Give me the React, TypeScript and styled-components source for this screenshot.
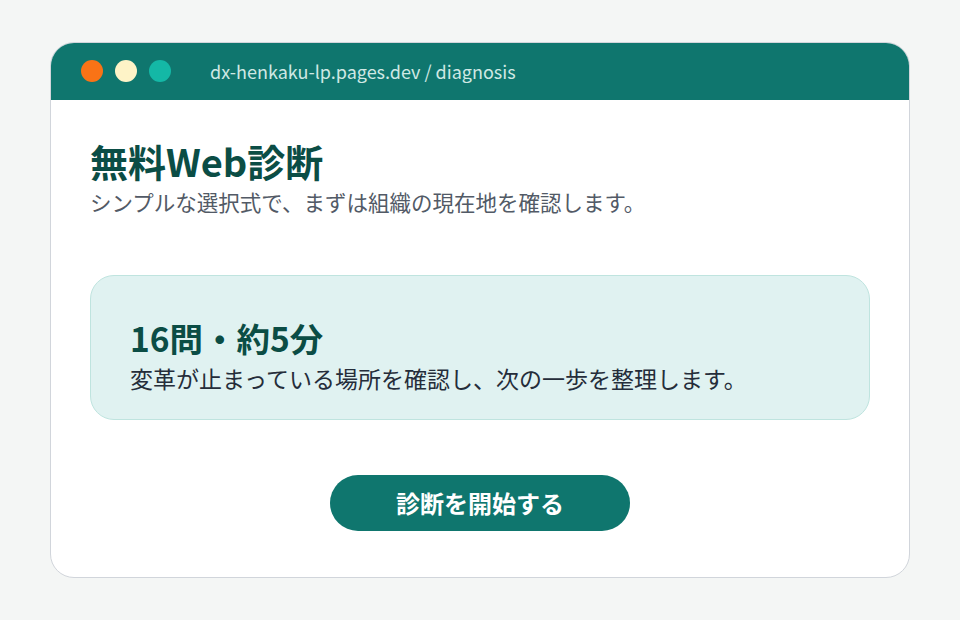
import React from 'react'
import styled, { createGlobalStyle } from 'styled-components'

const GlobalStyle = createGlobalStyle`
  html, body {
    margin: 0;
    padding: 0;
    background: #f4f6f5;
  }
  body {
    font-family: 'Noto Sans CJK JP', 'Noto Sans', sans-serif;
  }
`

const Page = styled.div`
  padding: 42px 50px;
  box-sizing: border-box;
  width: 960px;
  height: 620px;
`

const Window = styled.div`
  background: #ffffff;
  border: 1px solid #d1d5db;
  border-radius: 24px;
  overflow: hidden;
  display: flex;
  flex-direction: column;
  height: 536px;
  box-sizing: border-box;
`

const TitleBar = styled.div`
  height: 58px;
  background: #0f766e;
  display: flex;
  align-items: center;
  padding: 0 31px;
  margin: -1px -1px 0;
  flex-shrink: 0;
`

const Dots = styled.div`
  display: flex;
  gap: 12px;
  margin-right: 39px;
`

const Dot = styled.span<{ $color: string }>`
  width: 22px;
  height: 22px;
  border-radius: 50%;
  background: ${(p) => p.$color};
`

const Url = styled.div`
  color: #cfe8e4;
  font-size: 18px;
  line-height: 1;
`

const Content = styled.div`
  padding: 37px 39px 0;
  display: flex;
  flex-direction: column;
`

const Title = styled.h1`
  margin: 0;
  font-size: 38px;
  line-height: 1.25;
  font-weight: 700;
  color: #0b4d45;
`

const Lead = styled.p`
  margin: 1px 0 0;
  font-size: 21.5px;
  line-height: 1.5;
  color: #525a66;
`

const InfoCard = styled.div`
  margin-top: 57px;
  background: #e0f2f1;
  border: 1px solid #bfe4df;
  border-radius: 24px;
  padding: 40px 39px 23px;
`

const CardTitle = styled.h2`
  margin: 0;
  font-size: 33.5px;
  line-height: 1.3;
  font-weight: 700;
  color: #0b4d45;
`

const CardText = styled.p`
  margin: 2px 0 0;
  font-size: 23px;
  line-height: 1.5;
  color: #252d3a;
`

const Actions = styled.div`
  display: flex;
  justify-content: center;
  margin-top: 55px;
`

const StartButton = styled.button`
  width: 300px;
  height: 56px;
  border: none;
  border-radius: 28px;
  background: #0f766e;
  color: #ffffff;
  font-family: 'Noto Sans CJK JP', 'Noto Sans', sans-serif;
  font-size: 24px;
  font-weight: 700;
  cursor: pointer;
`

export default function App() {
  return (
    <>
      <GlobalStyle />
      <Page>
        <Window>
          <TitleBar>
            <Dots>
              <Dot $color="#f97316" />
              <Dot $color="#fef3c7" />
              <Dot $color="#14b8a6" />
            </Dots>
            <Url>dx-henkaku-lp.pages.dev / diagnosis</Url>
          </TitleBar>
          <Content>
            <Title>無料Web診断</Title>
            <Lead>シンプルな選択式で、まずは組織の現在地を確認します。</Lead>
            <InfoCard>
              <CardTitle>16問・約5分</CardTitle>
              <CardText>変革が止まっている場所を確認し、次の一歩を整理します。</CardText>
            </InfoCard>
            <Actions>
              <StartButton>診断を開始する</StartButton>
            </Actions>
          </Content>
        </Window>
      </Page>
    </>
  )
}
